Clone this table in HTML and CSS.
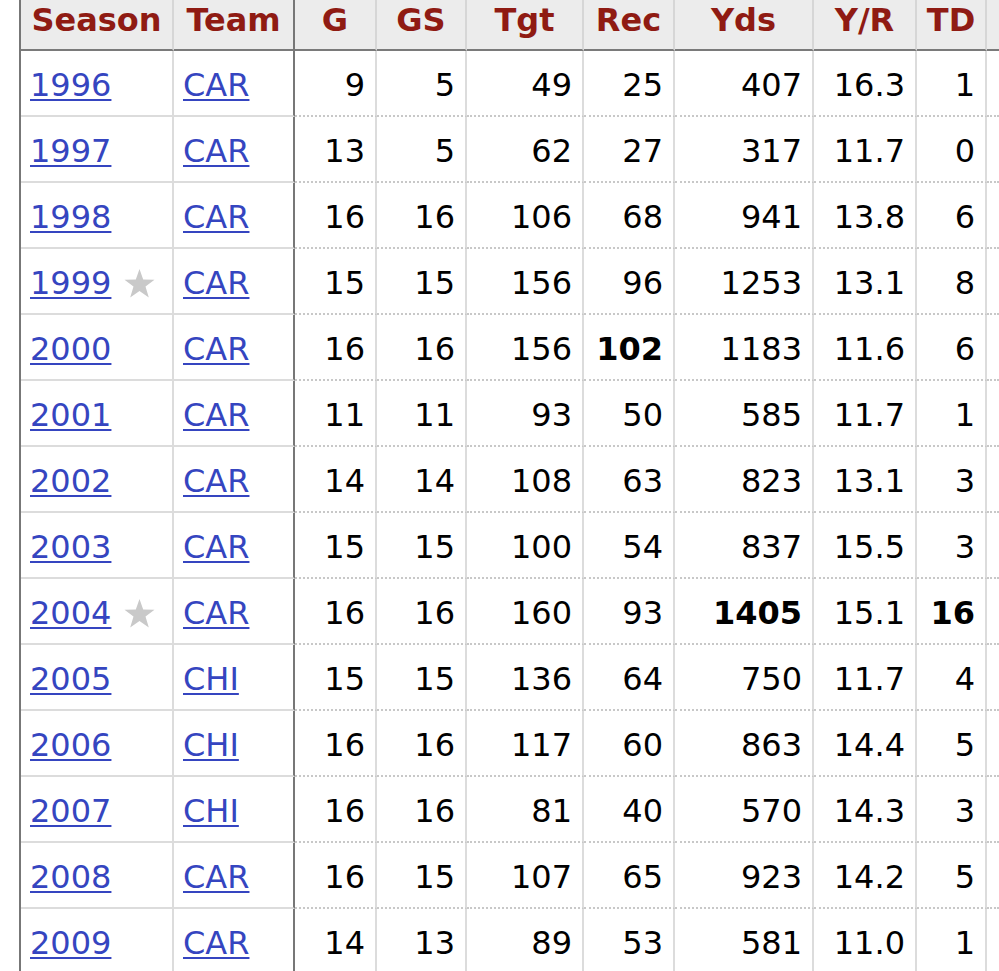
FILE: index.html
```html
<!DOCTYPE html>
<html lang="en">
<head>
<meta charset="utf-8">
<title>Receiving stats</title>
<link rel="stylesheet" href="styles.css">
</head>
<body>
<div class="stats" role="table">
  <div class="row head" role="row">
    <div class="c">Season</div><div class="c team">Team</div><div class="c">G</div><div class="c">GS</div><div class="c">Tgt</div><div class="c">Rec</div><div class="c">Yds</div><div class="c">Y/R</div><div class="c">TD</div><div class="c last"></div>
  </div>
  <div class="row"><div class="c yr"><a href="#">1996</a></div><div class="c team"><a href="#">CAR</a></div><div class="c">9</div><div class="c">5</div><div class="c">49</div><div class="c">25</div><div class="c">407</div><div class="c">16.3</div><div class="c">1</div><div class="c last"></div></div>
  <div class="row"><div class="c yr"><a href="#">1997</a></div><div class="c team"><a href="#">CAR</a></div><div class="c">13</div><div class="c">5</div><div class="c">62</div><div class="c">27</div><div class="c">317</div><div class="c">11.7</div><div class="c">0</div><div class="c last"></div></div>
  <div class="row"><div class="c yr"><a href="#">1998</a></div><div class="c team"><a href="#">CAR</a></div><div class="c">16</div><div class="c">16</div><div class="c">106</div><div class="c">68</div><div class="c">941</div><div class="c">13.8</div><div class="c">6</div><div class="c last"></div></div>
  <div class="row"><div class="c yr"><a href="#">1999</a><svg class="star" viewBox="0 0 31 29" width="31" height="29" aria-label="Pro Bowl"><path d="M15.5 0 L19.2 10.6 L30.5 10.8 L21.5 17.6 L24.8 28.5 L15.5 22 L6.2 28.5 L9.5 17.6 L0.5 10.8 L11.8 10.6 Z"/></svg></div><div class="c team"><a href="#">CAR</a></div><div class="c">15</div><div class="c">15</div><div class="c">156</div><div class="c">96</div><div class="c">1253</div><div class="c">13.1</div><div class="c">8</div><div class="c last"></div></div>
  <div class="row"><div class="c yr"><a href="#">2000</a></div><div class="c team"><a href="#">CAR</a></div><div class="c">16</div><div class="c">16</div><div class="c">156</div><div class="c"><strong>102</strong></div><div class="c">1183</div><div class="c">11.6</div><div class="c">6</div><div class="c last"></div></div>
  <div class="row"><div class="c yr"><a href="#">2001</a></div><div class="c team"><a href="#">CAR</a></div><div class="c">11</div><div class="c">11</div><div class="c">93</div><div class="c">50</div><div class="c">585</div><div class="c">11.7</div><div class="c">1</div><div class="c last"></div></div>
  <div class="row"><div class="c yr"><a href="#">2002</a></div><div class="c team"><a href="#">CAR</a></div><div class="c">14</div><div class="c">14</div><div class="c">108</div><div class="c">63</div><div class="c">823</div><div class="c">13.1</div><div class="c">3</div><div class="c last"></div></div>
  <div class="row"><div class="c yr"><a href="#">2003</a></div><div class="c team"><a href="#">CAR</a></div><div class="c">15</div><div class="c">15</div><div class="c">100</div><div class="c">54</div><div class="c">837</div><div class="c">15.5</div><div class="c">3</div><div class="c last"></div></div>
  <div class="row"><div class="c yr"><a href="#">2004</a><svg class="star" viewBox="0 0 31 29" width="31" height="29" aria-label="Pro Bowl"><path d="M15.5 0 L19.2 10.6 L30.5 10.8 L21.5 17.6 L24.8 28.5 L15.5 22 L6.2 28.5 L9.5 17.6 L0.5 10.8 L11.8 10.6 Z"/></svg></div><div class="c team"><a href="#">CAR</a></div><div class="c">16</div><div class="c">16</div><div class="c">160</div><div class="c">93</div><div class="c"><strong>1405</strong></div><div class="c">15.1</div><div class="c"><strong>16</strong></div><div class="c last"></div></div>
  <div class="row"><div class="c yr"><a href="#">2005</a></div><div class="c team"><a href="#">CHI</a></div><div class="c">15</div><div class="c">15</div><div class="c">136</div><div class="c">64</div><div class="c">750</div><div class="c">11.7</div><div class="c">4</div><div class="c last"></div></div>
  <div class="row"><div class="c yr"><a href="#">2006</a></div><div class="c team"><a href="#">CHI</a></div><div class="c">16</div><div class="c">16</div><div class="c">117</div><div class="c">60</div><div class="c">863</div><div class="c">14.4</div><div class="c">5</div><div class="c last"></div></div>
  <div class="row"><div class="c yr"><a href="#">2007</a></div><div class="c team"><a href="#">CHI</a></div><div class="c">16</div><div class="c">16</div><div class="c">81</div><div class="c">40</div><div class="c">570</div><div class="c">14.3</div><div class="c">3</div><div class="c last"></div></div>
  <div class="row"><div class="c yr"><a href="#">2008</a></div><div class="c team"><a href="#">CAR</a></div><div class="c">16</div><div class="c">15</div><div class="c">107</div><div class="c">65</div><div class="c">923</div><div class="c">14.2</div><div class="c">5</div><div class="c last"></div></div>
  <div class="row"><div class="c yr"><a href="#">2009</a></div><div class="c team"><a href="#">CAR</a></div><div class="c">14</div><div class="c">13</div><div class="c">89</div><div class="c">53</div><div class="c">581</div><div class="c">11.0</div><div class="c">1</div><div class="c last"></div></div>
</div>
</body>
</html>
```
FILE: styles.css
```css
html, body {
  margin: 0;
  padding: 0;
  overflow: hidden;
  background: #fff;
}
body {
  font-family: "DejaVu Sans", Verdana, sans-serif;
  font-size: 32px;
  color: #000;
}
.stats {
  margin-left: 19px;
  border-left: 2px solid #777;
  width: 978px;
}
.row {
  display: grid;
  grid-template-columns: 153px 121px 82px 90px 117px 91px 139px 103px 70px 12px;
}
.c {
  box-sizing: border-box;
  height: 66px;
  line-height: 37px;
  padding: 16px 10px 11px;
  text-align: right;
  white-space: nowrap;
  border-right: 2px solid #dcdcdc;
  border-bottom: 2px dotted #c8c8c8;
}
.c.yr, .c.team {
  text-align: left;
  padding-left: 9px;
  border-bottom: 2px solid #dcdcdc;
}
.c.team {
  border-right: 2px solid #777;
}
.c.last {
  border-right: 0;
  padding: 0;
}
.head .c {
  height: 51px;
  padding: 2px 0 10px;
  text-align: center;
  background: #ececec;
  color: #8f1b13;
  font-weight: bold;
  border-bottom: 2px solid #7a7a7a;
  border-right-color: #d6d6d6;
}
.head .c.team {
  border-right-color: #777;
}
a {
  color: #3545c0;
  text-decoration: underline;
  text-decoration-thickness: 2px;
  text-underline-offset: 3px;
}
strong {
  font-weight: bold;
}
.star {
  fill: #c9c9c9;
  margin-left: 13px;
  vertical-align: -4px;
}
```
